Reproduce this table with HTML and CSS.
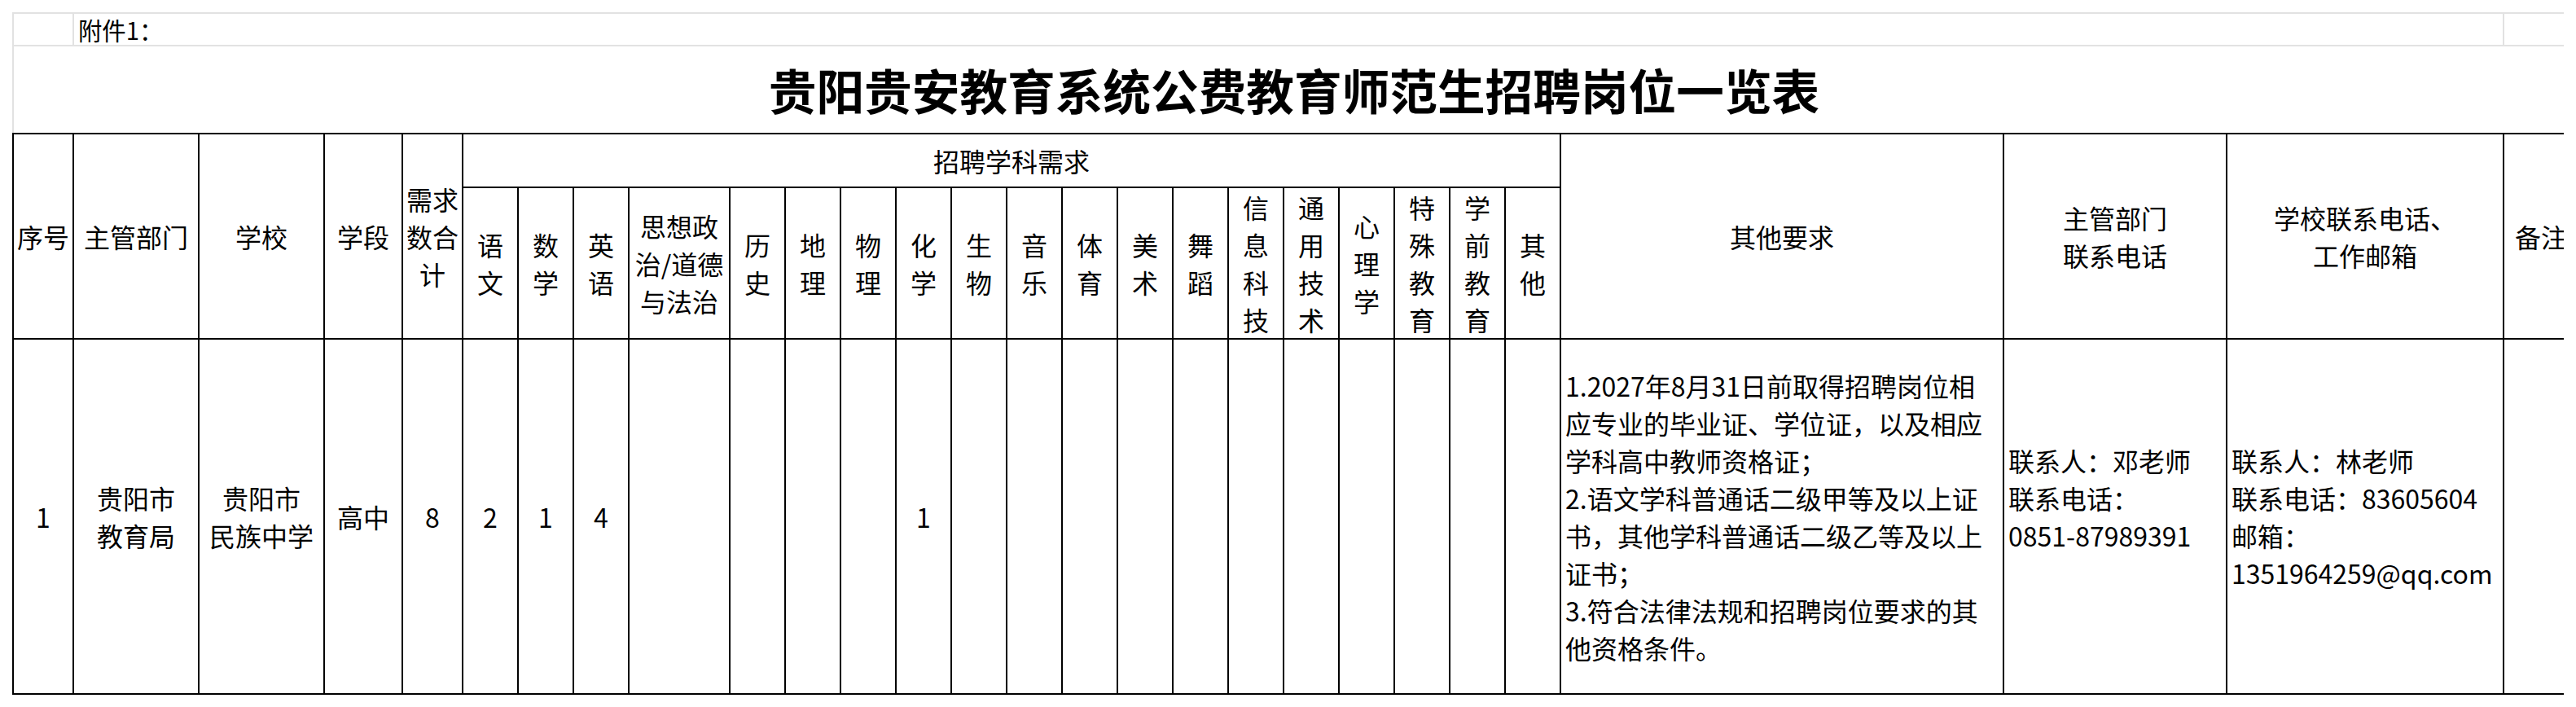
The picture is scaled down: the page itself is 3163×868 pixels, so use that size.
FILE: index.html
```html
<!DOCTYPE html>
<html lang="zh-CN">
<head>
<meta charset="utf-8">
<title>贵阳贵安教育系统公费教育师范生招聘岗位一览表</title>
<link rel="stylesheet" href="styles.css">
</head>
<body>
<div class="sheet">
  <div class="row-attach">
    <div class="ca-idx"></div>
    <div class="ca-text">附件1：</div>
    <div class="ca-rest"></div>
  </div>
  <div class="row-title">
    <h1 class="title">贵阳贵安教育系统公费教育师范生招聘岗位一览表</h1>
  </div>
  <div class="grid">
    <div class="cell r2">序号</div>
    <div class="cell r2">主管部门</div>
    <div class="cell r2">学校</div>
    <div class="cell r2">学段</div>
    <div class="cell r2">需求<br>数合<br>计</div>
    <div class="cell c19">招聘学科需求</div>
    <div class="cell r2">其他要求</div>
    <div class="cell r2">主管部门<br>联系电话</div>
    <div class="cell r2">学校联系电话、<br>工作邮箱</div>
    <div class="cell r2">备注</div>

    <div class="cell">语<br>文</div>
    <div class="cell">数<br>学</div>
    <div class="cell">英<br>语</div>
    <div class="cell">思想政<br>治/道德<br>与法治</div>
    <div class="cell">历<br>史</div>
    <div class="cell">地<br>理</div>
    <div class="cell">物<br>理</div>
    <div class="cell">化<br>学</div>
    <div class="cell">生<br>物</div>
    <div class="cell">音<br>乐</div>
    <div class="cell">体<br>育</div>
    <div class="cell">美<br>术</div>
    <div class="cell">舞<br>蹈</div>
    <div class="cell">信<br>息<br>科<br>技</div>
    <div class="cell">通<br>用<br>技<br>术</div>
    <div class="cell">心<br>理<br>学</div>
    <div class="cell">特<br>殊<br>教<br>育</div>
    <div class="cell">学<br>前<br>教<br>育</div>
    <div class="cell">其<br>他</div>

    <div class="cell">1</div>
    <div class="cell">贵阳市<br>教育局</div>
    <div class="cell">贵阳市<br>民族中学</div>
    <div class="cell">高中</div>
    <div class="cell">8</div>
    <div class="cell">2</div>
    <div class="cell">1</div>
    <div class="cell">4</div>
    <div class="cell"></div>
    <div class="cell"></div>
    <div class="cell"></div>
    <div class="cell"></div>
    <div class="cell">1</div>
    <div class="cell"></div>
    <div class="cell"></div>
    <div class="cell"></div>
    <div class="cell"></div>
    <div class="cell"></div>
    <div class="cell"></div>
    <div class="cell"></div>
    <div class="cell"></div>
    <div class="cell"></div>
    <div class="cell"></div>
    <div class="cell"></div>
    <div class="cell left">1.2027年8月31日前取得招聘岗位相<br>应专业的毕业证、学位证，以及相应<br>学科高中教师资格证；<br>2.语文学科普通话二级甲等及以上证<br>书，其他学科普通话二级乙等及以上<br>证书；<br>3.符合法律法规和招聘岗位要求的其<br>他资格条件。</div>
    <div class="cell left"><div class="contact-short">联系人：邓老师<br>联系电话：<br>0851-87989391</div></div>
    <div class="cell left">联系人：林老师<br>联系电话：83605604<br>邮箱：<br>1351964259@qq.com</div>
    <div class="cell"></div>
  </div>
</div>
</body>
</html>
```

FILE: styles.css
```css
html, body {
  margin: 0;
  padding: 0;
  background: #ffffff;
  overflow: hidden;
}

body {
  font-family: "Noto Sans CJK SC", "Microsoft YaHei", sans-serif;
  color: #000000;
}

.sheet {
  margin: 15px 0 0 15px;
  width: 3133px;
  overflow: hidden;
}

.row-attach {
  display: flex;
  width: 3200px;
  height: 38px;
  border-top: 2px solid #e2e2e2;
  border-bottom: 2px solid #e2e2e2;
  border-left: 2px solid #e2e2e2;
}

.ca-idx {
  width: 74px;
  flex: none;
  box-sizing: border-box;
  border-right: 2px solid #e2e2e2;
}

.ca-text {
  width: 2984px;
  flex: none;
  box-sizing: border-box;
  border-right: 2px solid #e2e2e2;
  padding-left: 5px;
  font-size: 29.33px;
  line-height: 38px;
  white-space: nowrap;
}

.ca-rest {
  flex: 1;
}

.row-title {
  display: flex;
  align-items: center;
  justify-content: center;
  width: 3144px;
  height: 106px;
  border-left: 2px solid #e2e2e2;
}

.title {
  margin: 0;
  font-size: 58.67px;
  font-weight: 700;
  line-height: 1;
  white-space: nowrap;
}

.grid {
  display: grid;
  grid-template-columns: 74px 154px 154px 96px 74px 68px 68px 68px 124px repeat(14, 68px) 68px 544px 274px 340px 92px;
  grid-template-rows: 66px 186px 436px;
  width: max-content;
  border-top: 2px solid #000000;
  border-left: 2px solid #000000;
}

.cell {
  box-sizing: border-box;
  display: flex;
  align-items: center;
  justify-content: center;
  text-align: center;
  border-right: 2px solid #000000;
  border-bottom: 2px solid #000000;
  font-size: 32px;
  line-height: 46px;
  white-space: nowrap;
}

.r2 {
  grid-row: span 2;
}

.c19 {
  grid-column: span 19;
}

.left {
  justify-content: flex-start;
  text-align: left;
  padding-left: 5px;
}

.contact-short {
  padding-bottom: 46px;
}
```
